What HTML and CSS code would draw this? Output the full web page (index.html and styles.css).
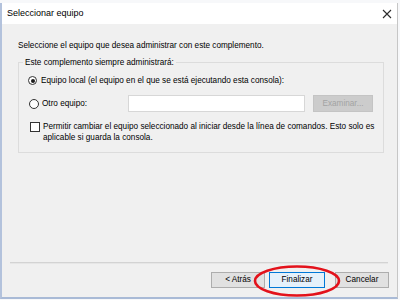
FILE: index.html
```html
<!DOCTYPE html>
<html lang="es">
<head>
<meta charset="utf-8">
<title>Seleccionar equipo</title>
<link rel="stylesheet" href="styles.css">
</head>
<body>
<div class="window">
  <div class="titlebar">
    <span class="title">Seleccionar equipo</span>
    <svg class="close" width="10" height="10" viewBox="0 0 10 10"><path d="M1 1L9 9M9 1L1 9" stroke="#2b2b2b" stroke-width="1.1" fill="none"/></svg>
  </div>
  <div class="content">
    <p class="intro">Seleccione el equipo que desea administrar con este complemento.</p>
    <fieldset class="group">
      <legend class="legend">Este complemento siempre administrará:</legend>
      <div class="row row-local">
        <span class="radio checked"></span>
        <span class="label">Equipo local (el equipo en el que se está ejecutando esta consola):</span>
      </div>
      <div class="row row-other">
        <span class="radio"></span>
        <span class="label">Otro equipo:</span>
        <span class="textbox"></span>
        <span class="btn-disabled">Examinar...</span>
      </div>
      <div class="row row-check">
        <span class="checkbox"></span>
        <span class="label multi">Permitir cambiar el equipo seleccionado al iniciar desde la línea de comandos. Esto solo es<br>aplicable si guarda la consola.</span>
      </div>
    </fieldset>
  </div>
  <div class="footer">
    <div class="separator"></div>
    <div class="buttons">
      <button class="btn btn-back">&lt; Atrás</button>
      <button class="btn btn-finish">Finalizar
        <svg class="mark" width="90" height="34" viewBox="0 0 90 34"><ellipse cx="45" cy="17" rx="42" ry="14.5" fill="none" stroke="#e3121b" stroke-width="2.6"/></svg>
      </button>
      <button class="btn btn-cancel">Cancelar</button>
    </div>
  </div>
</div>
</body>
</html>
```

FILE: styles.css
```css
html, body {
  margin: 0;
  padding: 0;
  background: #f7f8fa;
  width: 400px;
  height: 300px;
  overflow: hidden;
}
body {
  font-family: "Liberation Sans", Arial, sans-serif;
  font-size: 8.2px;
  line-height: 11px;
  color: #000;
}
.window {
  margin-top: 3px;
  width: 398px;
  height: 296px;
  box-sizing: border-box;
  border-left: 2px solid #b3c2dc;
  border-right: 1px solid #c6c6c6;
  border-bottom: 2px solid #a9bad6;
  background: #f0f0f0;
  display: flex;
  flex-direction: column;
}
.titlebar {
  height: 21px;
  background: #fff;
  display: flex;
  align-items: center;
  justify-content: space-between;
  padding: 0 5px 0 5px;
  flex-shrink: 0;
}
.title {
  font-size: 9px;
}
.close {
  display: block;
  margin-top: 0;
}
.content {
  padding: 16px 0 0 16px;
}
.intro {
  margin: 0;
}
.group {
  margin: 6px 0 0 0;
  width: 366px;
  box-sizing: border-box;
  border: 1px solid #dcdcdc;
  padding: 0 0 9px 0;
  min-width: 0;
}
.legend {
  padding: 0 2px;
  margin-left: 4px;
}
.row {
  display: flex;
  align-items: center;
  padding-left: 9px;
}
.row-local {
  margin-top: 7px;
}
.row-other {
  margin-top: 9px;
  height: 17px;
}
.row-check {
  margin-top: 9px;
  align-items: flex-start;
  padding-left: 11px;
}
.radio {
  width: 9px;
  height: 9px;
  box-sizing: border-box;
  border: 1px solid #333;
  border-radius: 50%;
  background: #fff;
  display: flex;
  align-items: center;
  justify-content: center;
  margin-right: 4px;
  flex-shrink: 0;
}
.radio.checked::after {
  content: "";
  width: 4px;
  height: 4px;
  border-radius: 50%;
  background: #1b1b1b;
}
.row-other .radio {
  margin-left: 1px;
  width: 10px;
  height: 10px;
  margin-right: 3px;
}
.textbox {
  width: 177px;
  height: 17px;
  box-sizing: border-box;
  background: #fff;
  border: 1px solid #d7d7d7;
  margin-left: auto;
}
.btn-disabled {
  width: 60px;
  height: 17px;
  box-sizing: border-box;
  background: #cccccc;
  border: 1px solid #c4c4c4;
  color: #a3a3a3;
  display: flex;
  align-items: center;
  justify-content: center;
  margin-left: 8px;
  margin-right: 10px;
}
.checkbox {
  width: 10px;
  height: 10px;
  box-sizing: border-box;
  border: 1px solid #333;
  background: #fff;
  margin-top: 1px;
  margin-right: 3px;
  flex-shrink: 0;
}
.multi {
  white-space: nowrap;
}
.footer {
  margin-top: auto;
  padding-bottom: 9px;
}
.separator {
  height: 2px;
  margin: 0 9px 0 8px;
  background: linear-gradient(#d3d3d3 50%, #e6e6e6 50%);
}
.buttons {
  display: flex;
  justify-content: flex-end;
  margin-top: 8px;
  padding-right: 8px;
}
.btn {
  font-family: inherit;
  font-size: 8.2px;
  line-height: 14px;
  height: 16px;
  padding: 0;
  margin: 0;
  box-sizing: border-box;
  background: #e1e1e1;
  border: 1px solid #adadad;
  color: #000;
}
.btn-back {
  width: 54px;
}
.btn-finish {
  width: 56px;
  margin-left: 4px;
  background: #e5f1fb;
  border-color: #0078d7;
  position: relative;
}
.btn-cancel {
  width: 54px;
  margin-left: 10px;
}
.mark {
  position: absolute;
  left: -18px;
  top: -9px;
  pointer-events: none;
  overflow: visible;
}
```
